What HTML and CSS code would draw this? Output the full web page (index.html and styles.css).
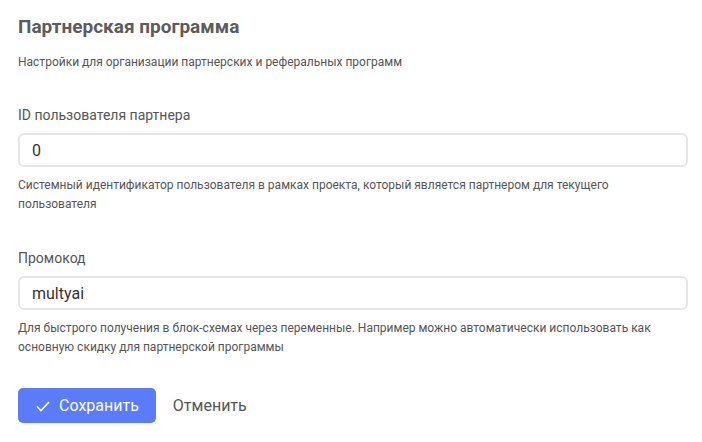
FILE: index.html
```html
<!DOCTYPE html>
<html lang="ru">
<head>
    <meta charset="UTF-8">
    <title>Партнерская программа</title>
    <link rel="stylesheet" href="styles.css">
</head>
<body>
    <div class="page">
        <h1 class="page-title">Партнерская программа</h1>
        <div class="page-desc">Настройки для организации партнерских и реферальных программ</div>

        <div class="field">
            <label class="field-label" for="partnerId">ID пользователя партнера</label>
            <input class="field-input" id="partnerId" type="text" value="0">
            <div class="field-hint">Системный идентификатор пользователя в рамках проекта, который является партнером для текущего пользователя</div>
        </div>

        <div class="field">
            <label class="field-label" for="promo">Промокод</label>
            <input class="field-input" id="promo" type="text" value="multyai">
            <div class="field-hint">Для быстрого получения в блок-схемах через переменные. Например можно автоматически использовать как основную скидку для партнерской программы</div>
        </div>

        <div class="actions">
            <button class="btn btn-primary">
                <svg width="16" height="16" viewBox="0 0 16 16"><path d="M2 8.5l4 4 8-8.5" fill="none" stroke="#fff" stroke-width="1.6"/></svg>
                <span>Сохранить</span>
            </button>
            <button class="btn btn-link">Отменить</button>
        </div>
    </div>
</body>
</html>
```

FILE: styles.css
```css
html, body {
    margin: 0;
    padding: 0;
    background-color: #fff;
    font-family: Roboto, 'Liberation Sans', sans-serif;
    color: #555;
}

.page {
    padding: 14px 14px 0 18px;
}

.page-title {
    margin: 0;
    font-size: 19px;
    font-weight: 700;
    line-height: 26px;
    color: #5c5c5c;
}

.page-desc {
    margin-top: 14px;
    font-size: 12px;
    line-height: 16px;
    color: #555;
}

.field {
    margin-top: 36px;
}

.field + .field {
    margin-top: 35px;
}

.field-label {
    display: block;
    font-size: 14px;
    line-height: 18px;
    color: #555;
    margin-bottom: 9px;
}

.field-input {
    display: block;
    box-sizing: border-box;
    width: 100%;
    height: 34px;
    padding: 0 12px;
    border: 2px solid #e6e6e6;
    border-radius: 6px;
    font-family: Roboto, 'Liberation Sans', sans-serif;
    font-size: 16px;
    color: #333;
    outline: none;
}

.field-hint {
    margin-top: 9px;
    font-size: 12px;
    line-height: 19px;
    color: #555;
}

.actions {
    display: flex;
    align-items: center;
    gap: 17px;
    margin-top: 31px;
}

.btn {
    font-family: Roboto, 'Liberation Sans', sans-serif;
    font-size: 16px;
    border: none;
    cursor: pointer;
}

.btn-primary {
    display: flex;
    align-items: center;
    gap: 8px;
    height: 35px;
    padding: 0 17px 0 17px;
    background-color: #5b7cf8;
    color: #fff;
    border-radius: 5px;
}

.btn-link {
    background: none;
    padding: 0;
    color: #555;
}
```
